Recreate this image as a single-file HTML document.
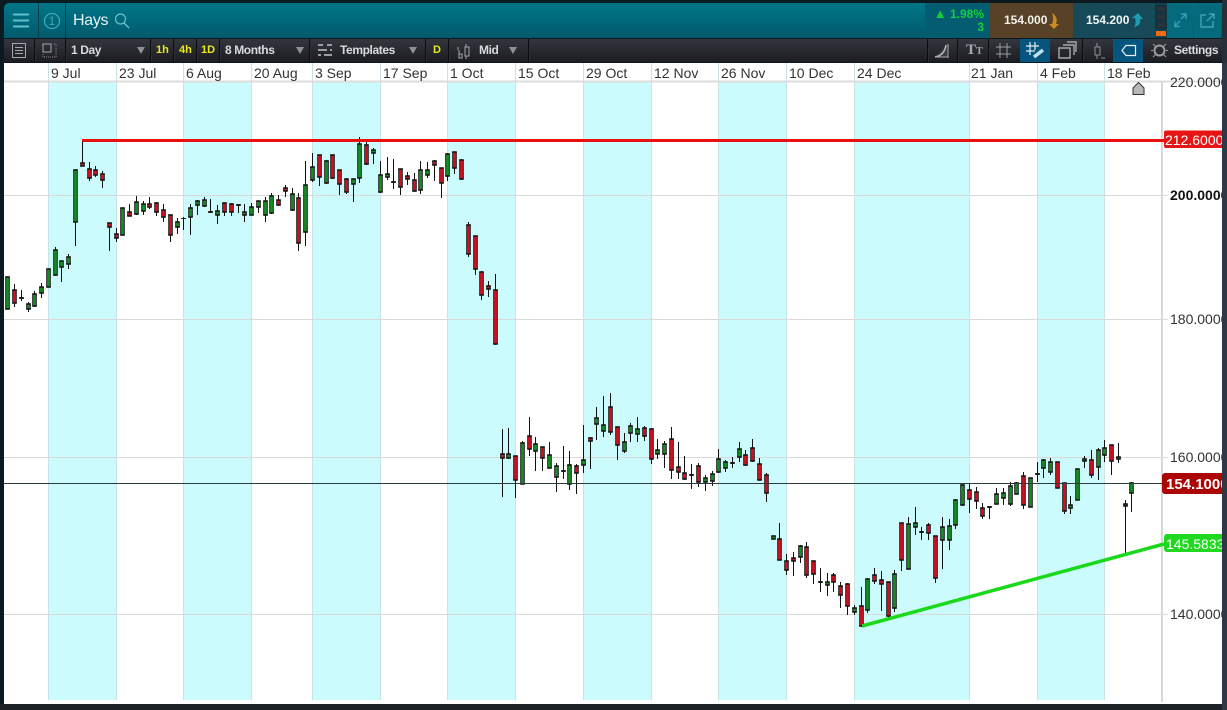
<!DOCTYPE html>
<html><head><meta charset="utf-8"><style>
html,body{margin:0;padding:0;width:1227px;height:710px;overflow:hidden;background:#0b1a20;font-family:"Liberation Sans",sans-serif}
.a{position:absolute}
#hd{left:4px;top:3px;width:1218px;height:35px;background:linear-gradient(#007688,#005a6b);border-top-left-radius:5px}
#tb{left:4px;top:39px;width:1218px;height:23px;background:linear-gradient(#33363d,#1b1d22)}
.s{position:absolute;top:39px;width:1px;height:23px;background:#0c0d10;border-right:1px solid #2e3036}
.t{position:absolute;top:43px;font-size:12px;line-height:14px;font-weight:bold;color:#d8dadc;white-space:nowrap;letter-spacing:-.4px}
.y{position:absolute;top:43px;font-size:11px;line-height:14px;font-weight:bold;color:#e8e81a;white-space:nowrap}
.v{position:absolute;top:47px;width:0;height:0;border-left:4px solid transparent;border-right:4px solid transparent;border-top:7px solid #8d9095}
.b{position:absolute;top:39px;height:23px;background:#05557f}
</style></head><body>
<div class="a" style="left:1222px;top:0;width:5px;height:710px;background:#2f3945"></div>
<div class="a" style="left:0;top:704px;width:1227px;height:6px;background:#1d2227"></div>
<div class="a" style="left:4px;top:63px;width:1218px;height:641px;background:#fff"></div>
<div class="a" id="hd"></div>
<div class="a" style="left:925px;top:3px;width:65px;height:35px;background:#045c70"></div>
<div class="a" style="left:990px;top:3px;width:83px;height:35px;background:#574228"></div>
<div class="a" style="left:1073px;top:3px;width:82px;height:35px;background:#174a59"></div>
<div class="a" style="left:1155px;top:3px;width:12px;height:35px;background:#123f4e"></div>
<div class="a" style="left:1167px;top:3px;width:26px;height:35px;background:#066a7d"></div>
<div class="a" style="left:1194px;top:3px;width:27px;height:35px;background:#066a7d"></div>
<div class="a" style="left:38px;top:3px;width:1px;height:35px;background:#023c48"></div>
<div class="a" style="left:65px;top:3px;width:1px;height:35px;background:#023c48"></div>
<div class="a" id="tb"></div>
<div class="a" style="left:73px;top:11px;font-size:16px;line-height:20px;color:#e4f1f3;letter-spacing:-.3px">Hays</div>
<div class="a" style="left:45px;top:14px;width:14px;text-align:center;font-size:12px;line-height:14px;color:#3fa7b6">1</div>
<div class="a" style="left:930px;top:7px;width:54px;text-align:right;font-size:12px;line-height:14px;font-weight:bold;color:#12cf3c"><span style="font-size:13px">▲</span> 1.98%</div>
<div class="a" style="left:930px;top:20px;width:54px;text-align:right;font-size:12px;line-height:14px;font-weight:bold;color:#12cf3c">3</div>
<div class="a" style="left:1004px;top:13px;font-size:12px;line-height:14px;font-weight:bold;color:#f4f1ea">154.000</div>
<div class="a" style="left:1086px;top:13px;font-size:12px;line-height:14px;font-weight:bold;color:#f0f5f6">154.200</div>
<svg class="a" style="left:0;top:0" width="1227" height="64" fill="none">
<path d="M13 14.500h16M13 20.500h16M13 26.500h16" stroke="#5fc0cc" stroke-width="2"/>
<circle cx="52" cy="21" r="7.500" stroke="#3fa7b6" stroke-width="1.300"/>
<circle cx="120.500" cy="19" r="5" stroke="#6cc0cc" stroke-width="1.200"/><path d="M124 23l5 5" stroke="#6cc0cc" stroke-width="1.400"/>
<path d="M1052 13c4 2 6 7 4 11h3l-5 5-5-5h3c2-4 1-8 0-11z" fill="#c98a20"/>
<path d="M1134 27c2-3 2-6 1-9h-3l6-5 5 6h-3c1 4-1 7-6 8z" fill="#1e9cb4"/>
<path d="M1156 6h10v6h-10zM1156 14h10v6h-10zM1156 22h10v6h-10z" fill="#2a3338" stroke="#0c2c38"/>
<path d="M1156 31h10v5h-10z" fill="#f06a10"/>
<path d="M1175 26l5-5M1175 21.500v5h5M1186 14l-5 5M1181 14h5v5" stroke="#2f9fb4" stroke-width="1.500"/>
<path d="M1206 15h-5v12h12v-6" stroke="#4eacbb" stroke-width="1.200"/><path d="M1207 21l7-7M1209 14h5v5" stroke="#4eacbb" stroke-width="1.200"/>
<path d="M12.500 43.500h13v14h-13z" stroke="#a5a8ac" stroke-width="1"/><path d="M15 47.500h8M15 50.500h8M15 53.500h8" stroke="#a5a8ac"/>
<path d="M43 44h8v8h-8z" stroke="#a5a8ac"/><path d="M43 54v3h13v-13h-3" stroke="#85888d" stroke-dasharray="1 1"/>
<path d="M318 45h5M327 45h5M318 50h9M330 50h2M318 55h3M324 55h8" stroke="#9a9da1" stroke-width="2"/>
<path d="M459 50v8h3v-4h-3M465 47h4v9h-4zM466 44v3M466 56v3M458 50v-3" stroke="#a5a8ac"/>
<path d="M936 56L948 44v13h-13z" fill="#3a3c40"/><path d="M935 57c6-1 10-5 11-12" stroke="#b5b8bb" stroke-width="1.500"/><path d="M935 57h14M948 44v13" stroke="#a5a8ac"/>
<path d="M996 47h15M996 54h15M1000 43v15M1007 43v15" stroke="#9a9da1"/>
</svg>
<div class="a" style="left:966px;top:43px;font-family:'Liberation Serif',serif;font-weight:bold;font-size:15px;line-height:15px;color:#a5a8ac">T<span style="font-size:10px">T</span></div>
<div class="s" style="left:34px"></div><div class="s" style="left:65px"></div>
<div class="s" style="left:150px"></div><div class="s" style="left:173px"></div><div class="s" style="left:196px"></div><div class="s" style="left:219px"></div>
<div class="s" style="left:309px"></div><div class="s" style="left:425px"></div><div class="s" style="left:448px"></div><div class="s" style="left:528px"></div>
<div class="s" style="left:927px"></div><div class="s" style="left:957px"></div><div class="s" style="left:988px"></div><div class="s" style="left:1082px"></div>
<div class="b" style="left:1020px;width:30px"></div><div class="b" style="left:1113px;width:30px"></div>
<svg class="a" style="left:0;top:0" width="1227" height="64" fill="none">
<path d="M1026 46h13M1026 51h9M1030 42v13M1035 42v8" stroke="#e6eef2" stroke-width="1.200"/><path d="M1034 57l9-7" stroke="#bfe0ee" stroke-width="3.500"/>
<path d="M1059 48h11v10h-11z" stroke="#a5a8ac" stroke-width="1.400"/><path d="M1063 45h11v10M1067 42h9v10" stroke="#a5a8ac" stroke-width="1.400"/>
<path d="M1097 43v4M1097 55v4M1095 47h5v8h-5zM1101 58h4" stroke="#8d9095"/>
<path d="M1126 45.500h9.500v10h-9.500l-4-5z" stroke="#e8f2f6" stroke-width="1.200"/>
<circle cx="1159.500" cy="50.500" r="5" stroke="#9a9da1" stroke-width="2"/><path d="M1153 44l3 3M1166 44l-3 3M1153 57l3-3M1166 57l-3-3M1151 50.500h2M1166 50.500h2" stroke="#9a9da1"/>
</svg>
<div class="t" style="left:71px">1 Day</div><div class="v" style="left:137px"></div>
<div class="y" style="left:156px">1h</div><div class="y" style="left:179px">4h</div><div class="y" style="left:201px">1D</div>
<div class="t" style="left:225px">8 Months</div><div class="v" style="left:296px"></div>
<div class="t" style="left:340px">Templates</div><div class="v" style="left:409px"></div>
<div class="y" style="left:433px">D</div>
<div class="t" style="left:479px">Mid</div><div class="v" style="left:509px"></div>
<div class="t" style="left:1174px">Settings</div>
<svg class="a" style="left:0;top:63px" width="1222" height="641" viewBox="0 63 1222 641" font-family="Liberation Sans, sans-serif" fill="none">
<defs>
<marker id="m" markerUnits="userSpaceOnUse" markerWidth="6" markerHeight="2" refX="3" refY="1"><rect x=".7" y=".2" width="4.600" height="1.600" fill="#161616"/></marker>
<path id="g" d="M8 277V309M29 304V309M35 294V306M42 287V293M49 269V287M56 250V275M62 261V267M69 257V264M76 170V222M123 208V235M137 202V214M144 204V211M178 222V227M191 208V217M198 201V205M205 200V206M218 211V215M245 212V215M252 207V215M259 201V207M266 201V215M272 196V213M293 194V210M306 185V232M313 167V180M327 161V183M354 179V184M360 144V178M374 150V153M381 175V192M388 174V177M421 170V190M428 170V175M448 154V176M509 454V458M523 443V484M536 444V451M550 455V468M557 466V477M570 465V484M584 460V465M597 418V424M604 425V431M625 442V451M631 426V433M638 429V434M658 450V454M665 444V454M706 478V482M713 474V481M719 459V472M726 462V468M740 449V457M774 536V539M801 546V557M828 582V585M855 608V612M868 579V610M895 574V608M909 524V569M916 523V527M943 527V540M950 526V540M956 500V525M963 485V505M997 494V504M1004 493V498M1011 486V504M1017 483V494M1031 478V507M1044 460V468M1051 462V472M1071 505V508M1078 469V500M1085 459V461M1099 450V467M1105 448V455M1119 457V459M1126 504V506M1132 483V493"/>
<path id="r" d="M15 290V303M83 163V166M90 169V178M96 170V175M103 174V180M110 223V227M117 234V238M130 212V216M150 204V207M157 203V212M164 210V217M171 215V235M225 203V212M232 204V212M279 200V205M286 188V191M299 198V243M320 155V177M333 155V178M340 170V184M347 179V192M367 145V164M401 169V187M408 176V179M415 180V191M435 161V165M442 168V183M455 152V168M462 160V179M469 225V254M476 236V269M482 272V295M489 286V289M496 290V344M503 454V458M516 456V480M530 436V449M543 447V458M577 466V473M591 438V441M611 407V432M618 427V445M645 428V436M652 429V459M672 439V470M679 467V472M685 473V479M699 466V482M746 455V465M753 448V461M760 464V480M767 475V493M780 539V560M787 561V570M794 558V561M807 547V575M814 561V574M834 575V582M841 586V595M848 584V606M862 606V626M875 575V581M882 580V584M889 582V616M902 523V560M929 525V533M936 536V578M970 490V499M977 492V501M983 508V516M1024 476V505M1058 462V488M1065 483V511M1092 460V475M1112 445V461"/>
</defs>
<g fill="#ccfbfd"><rect x="49" y="82" width="67" height="618"/><rect x="184" y="82" width="67" height="618"/><rect x="313" y="82" width="67" height="618"/><rect x="448" y="82" width="67" height="618"/><rect x="584" y="82" width="67" height="618"/><rect x="719" y="82" width="67" height="618"/><rect x="855" y="82" width="114" height="618"/><rect x="1038" y="82" width="66" height="618"/></g>
<path d="M48.500 63V700M116.500 63V700M183.500 63V700M251.500 63V700M312.500 63V700M380.500 63V700M447.500 63V700M515.500 63V700M583.500 63V700M651.500 63V700M718.500 63V700M786.500 63V700M854.500 63V700M969.500 63V700M1037.500 63V700M1104.500 63V700" stroke="#c9e2e4"/>
<path d="M4 81.500H1222" stroke="#dcdcdc" stroke-width="2"/>
<path d="M4 195.500H1168M4 319.500H1168M4 457.500H1168M4 614.500H1168" stroke="#d9d9d9"/>
<path d="M1162 82V702" stroke="#d8d8d8" stroke-width="2"/>
<g font-size="14" fill="#333">
<text x="51" y="78">9 Jul</text><text x="119" y="78">23 Jul</text><text x="186" y="78">6 Aug</text><text x="254" y="78">20 Aug</text><text x="315" y="78">3 Sep</text><text x="383" y="78">17 Sep</text><text x="450" y="78">1 Oct</text><text x="518" y="78">15 Oct</text><text x="586" y="78">29 Oct</text><text x="654" y="78">12 Nov</text><text x="721" y="78">26 Nov</text><text x="789" y="78">10 Dec</text><text x="857" y="78">24 Dec</text><text x="971" y="78">21 Jan</text><text x="1040" y="78">4 Feb</text><text x="1107" y="78">18 Feb</text>
<text x="1170" y="87">220.0000</text><text x="1170" y="324">180.0000</text><text x="1170" y="462">160.0000</text><text x="1170" y="619">140.0000</text>
<text x="1170" y="200" font-weight="bold" fill="#111">200.0000</text>
</g>
<path d="M1133 88l5.500-5.500 5.500 5.500v6.500h-11z" fill="#b9b9b9" stroke="#333"/>
<g transform="translate(-.5 0)">
<path stroke="#111" d="M8 277V309M15 284V307M22 290V301M29 302V312M35 291V307M42 283V298M49 269V287M56 247V276M62 261V282M69 254V269M76 169V246M83 140V166M90 162V181M96 166V177M103 171V188M110 223V251M117 228V242M123 208V235M130 204V216M137 196V215M144 201V215M150 197V209M157 202V216M164 204V222M171 215V242M178 218V234M184 217V230M191 204V235M198 200V215M205 197V207M211 199V213M218 205V224M225 203V216M232 203V216M239 204V213M245 204V222M252 203V215M259 201V213M266 197V222M272 193V214M279 195V206M286 185V197M293 188V211M299 193V251M306 161V246M313 153V182M320 155V186M327 160V184M333 155V179M340 170V195M347 178V194M354 179V202M360 137V183M367 142V165M374 148V164M381 161V193M388 157V180M394 159V189M401 169V195M408 172V185M415 173V192M421 161V194M428 162V178M435 160V181M442 168V198M448 153V181M455 152V174M462 159V180M469 222V257M476 236V275M482 271V300M489 281V297M496 274V345M503 429V497M509 428V459M516 456V498M523 441V484M530 417V456M536 437V471M543 447V471M550 442V468M557 463V492M564 446V479M570 451V490M577 464V494M584 425V473M591 437V469M597 407V440M604 396V437M611 393V435M618 427V460M625 433V453M631 423V442M638 417V442M645 426V441M652 428V464M658 439V459M665 441V468M672 427V479M679 442V479M685 456V480M692 464V489M699 463V487M706 475V491M713 471V486M719 449V473M726 460V472M733 457V468M740 442V462M746 450V466M753 439V462M760 458V480M767 473V502M780 523V560M787 554V575M794 552V576M801 545V563M807 542V578M814 561V584M821 568V592M828 573V596M834 573V592M841 582V608M848 583V615M855 605V615M862 587V627M868 578V613M875 568V584M882 571V611M889 582V619M895 570V612M902 523V571M909 517V569M916 507V535M922 527V540M929 523V540M936 536V583M943 517V569M950 519V550M956 499V529M963 484V506M970 483V513M977 487V509M983 503V519M990 506V519M997 488V504M1004 488V505M1011 482V506M1017 482V494M1024 472V509M1031 478V507M1038 462V482M1044 459V478M1051 458V475M1058 462V488M1065 483V514M1071 496V514M1078 469V500M1085 456V468M1092 450V478M1099 448V480M1105 440V462M1112 445V475M1119 443V463M1126 500V554M1132 482V512"/>
<path stroke="#1a1a1a" stroke-width="4.600" d="M22 297V299M184 218V219M211 211V213M239 204V206M394 181V183M564 470V472M692 474V476M733 462V464M821 581V583M922 531V533M990 506V508M1038 473V475"/>
<use href="#g" stroke="#1c1c1c" stroke-width="4.600"/><use href="#r" stroke="#1c1c1c" stroke-width="4.600"/>
<use href="#g" stroke="#158c22" stroke-width="2.800" style="marker:url(#m)"/>
<use href="#r" stroke="#cf1020" stroke-width="2.800" style="marker:url(#m)"/>
</g>
<path d="M4 483.500H1164" stroke="#2b3a3a"/>
<path d="M82 140.500H1165" stroke="#e81010" stroke-width="3"/>
<path d="M862 626L1164 544" stroke="#1ad81a" stroke-width="3.500"/>
<rect x="1164" y="130.500" width="62" height="17.500" rx="2" fill="#e61414"/>
<rect x="1162" y="473" width="64" height="21" rx="3" fill="#ab0505"/>
<rect x="1164" y="534" width="62" height="18" rx="3" fill="#1fd81f"/>
<text x="1165" y="145" font-size="14" fill="#fff">212.6000</text>
<text x="1166" y="489" font-size="15" font-weight="bold" fill="#fff">154.1000</text>
<text x="1166" y="549" font-size="14" fill="#fff">145.5833</text>
</svg>
<div class="a" style="left:1222px;top:63px;width:5px;height:647px;background:#2f3945"></div>
<div class="a" style="left:1222px;top:0;width:5px;height:63px;background:#23303a"></div>
</body></html>
